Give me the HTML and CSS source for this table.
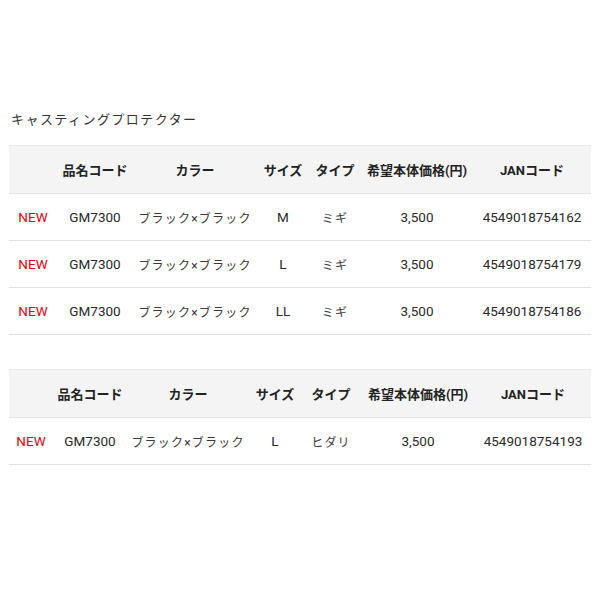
FILE: index.html
```html
<!DOCTYPE html>
<html lang="ja">
<head>
<meta charset="utf-8">
<link rel="stylesheet" href="styles.css">
</head>
<body>
<div class="page">
  <p class="title">キャスティングプロテクター</p>
  <table class="spec first">
    <colgroup><col class="c1"><col class="c2"><col class="c3"><col class="c4"><col class="c5"><col class="c6"><col class="c7"></colgroup>
    <thead>
      <tr><th></th><th>品名コード</th><th>カラー</th><th>サイズ</th><th>タイプ</th><th>希望本体価格(円)</th><th>JANコード</th></tr>
    </thead>
    <tbody>
      <tr><td class="new">NEW</td><td>GM7300</td><td class="kana">ブラック×ブラック</td><td>M</td><td class="kana">ミギ</td><td>3,500</td><td>4549018754162</td></tr>
      <tr><td class="new">NEW</td><td>GM7300</td><td class="kana">ブラック×ブラック</td><td>L</td><td class="kana">ミギ</td><td>3,500</td><td>4549018754179</td></tr>
      <tr><td class="new">NEW</td><td>GM7300</td><td class="kana">ブラック×ブラック</td><td>LL</td><td class="kana">ミギ</td><td>3,500</td><td>4549018754186</td></tr>
    </tbody>
  </table>
  <table class="spec second">
    <colgroup><col class="c1"><col class="c2"><col class="c3"><col class="c4"><col class="c5"><col class="c6"><col class="c7"></colgroup>
    <thead>
      <tr><th></th><th>品名コード</th><th>カラー</th><th>サイズ</th><th>タイプ</th><th>希望本体価格(円)</th><th>JANコード</th></tr>
    </thead>
    <tbody>
      <tr><td class="new">NEW</td><td>GM7300</td><td class="kana">ブラック×ブラック</td><td>L</td><td class="kana">ヒダリ</td><td>3,500</td><td>4549018754193</td></tr>
    </tbody>
  </table>
</div>
</body>
</html>
```
FILE: styles.css
```css
html, body {
  margin: 0;
  padding: 0;
  background: #fff;
}
body {
  font-family: Roboto, "Noto Sans CJK JP", sans-serif;
  color: #333;
}
.page {
  padding: 108px 9px 0 9px;
}
.title {
  margin: 0 0 15px 2px;
  font-family: "Noto Sans CJK JP", sans-serif;
  font-size: 13px;
  letter-spacing: 1.45px;
  line-height: 22px;
  color: #333;
}
.spec {
  width: 100%;
  border-collapse: collapse;
  table-layout: fixed;
  font-size: 13.5px;
}
.first .c1 { width: 48px; }
.first .c2 { width: 76px; }
.first .c3 { width: 124px; }
.first .c4 { width: 52px; }
.first .c5 { width: 52px; }
.first .c6 { width: 112px; }
.first .c7 { width: 118px; }
.second .c1 { width: 44px; }
.second .c2 { width: 74px; }
.second .c3 { width: 122px; }
.second .c4 { width: 52px; }
.second .c5 { width: 60px; }
.second .c6 { width: 114px; }
.second .c7 { width: 116px; }
.spec.second {
  margin-top: 34px;
}
.spec th {
  background: #f4f4f4;
  font-family: Roboto, "Noto Sans CJK JP", sans-serif;
  font-weight: bold;
  font-size: 13px;
  color: #222;
  height: 47px;
  padding: 0;
  text-align: center;
  white-space: nowrap;
  border-top: 1px solid #e6e6e6;
}
.spec td {
  height: 46px;
  padding: 0;
  text-align: center;
  border-bottom: 1px solid #e3e3e3;
  white-space: nowrap;
  color: #2a2a2a;
}
.spec thead tr {
  border-bottom: 1px solid #e3e3e3;
}
.spec .new {
  color: #e60012;
}
.spec .kana {
  font-family: Roboto, "Noto Sans CJK JP", sans-serif;
  font-size: 12px;
  letter-spacing: 1.2px;
  font-weight: 400;
  color: #3a3a3a;
}
```
